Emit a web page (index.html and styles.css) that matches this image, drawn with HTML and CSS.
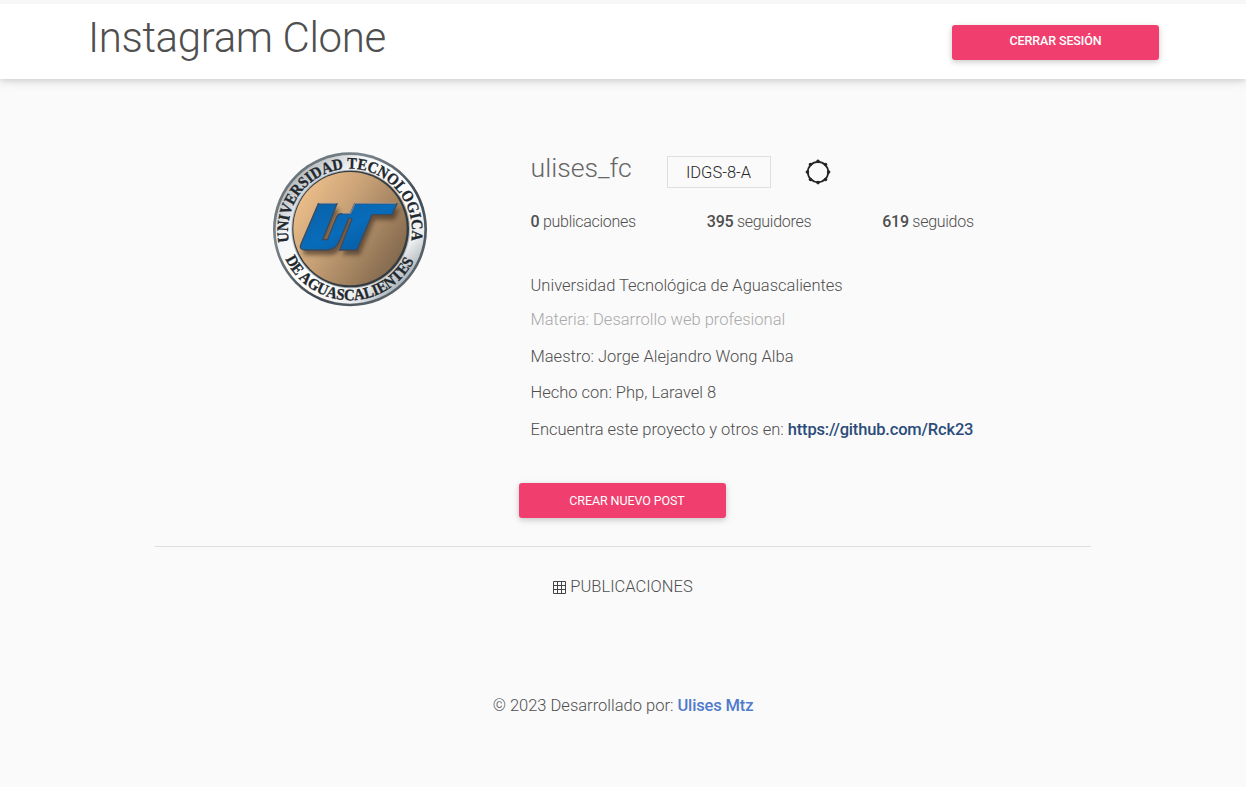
FILE: index.html
```html
<!DOCTYPE html>
<html lang="es">
<head>
<meta charset="utf-8">
<title>Instagram Clone</title>
<link rel="stylesheet" href="styles.css">
</head>
<body>
<header class="navbar">
  <h1 class="brand">Instagram Clone</h1>
  <button class="btn btn-logout">CERRAR SESIÓN</button>
</header>
<main class="content">
  <section class="profile">
    <svg class="avatar" viewBox="36 34 468 468" role="img" aria-label="Universidad Tecnologica de Aguascalientes">
      <defs>
        <linearGradient id="rim" x1="0" y1="0" x2="1" y2="1">
          <stop offset="0" stop-color="#59636a"/><stop offset=".3" stop-color="#7b858b"/>
          <stop offset=".6" stop-color="#424b52"/><stop offset="1" stop-color="#68727a"/>
        </linearGradient>
        <linearGradient id="silver" x1="0" y1="0" x2="1" y2="1">
          <stop offset="0" stop-color="#aeb4b8"/><stop offset=".15" stop-color="#b9bfc3"/>
          <stop offset=".3" stop-color="#f5f6f7"/><stop offset=".55" stop-color="#ffffff"/>
          <stop offset=".75" stop-color="#eceeef"/><stop offset=".87" stop-color="#a6aeb3"/>
          <stop offset="1" stop-color="#e8eaeb"/>
        </linearGradient>
        <linearGradient id="tan" x1="0" y1=".15" x2="1" y2=".8">
          <stop offset="0" stop-color="#f3c48e"/><stop offset=".4" stop-color="#c9a277"/>
          <stop offset="1" stop-color="#7c6349"/>
        </linearGradient>
        <linearGradient id="blue" x1="0" y1="0" x2="1" y2="1">
          <stop offset="0" stop-color="#0a60a8"/><stop offset=".5" stop-color="#086cba"/>
          <stop offset="1" stop-color="#07559a"/>
        </linearGradient>
        <filter id="soft" x="-20%" y="-20%" width="150%" height="150%"><feGaussianBlur stdDeviation="6"/></filter>
        <path id="arc-top" d="M87 307 A186 186 0 1 1 453 306"/>
        <path id="arc-bottom" d="M76 358 A214 214 0 0 0 465 356"/>
      </defs>
      <circle cx="270" cy="269" r="231" fill="url(#rim)"/>
      <circle cx="270" cy="269" r="223" fill="url(#silver)"/>
      <circle cx="272" cy="268" r="178" fill="#aeb5b9"/>
      <circle cx="272" cy="268" r="175" fill="#343b40"/>
      <circle cx="270" cy="267" r="170" fill="url(#tan)"/>
      <g class="logo-ring">
        <text textLength="648" lengthAdjust="spacingAndGlyphs"><textPath href="#arc-top" textLength="648" lengthAdjust="spacingAndGlyphs">UNIVERSIDAD TECNOLOGICA</textPath></text>
        <text textLength="480" lengthAdjust="spacingAndGlyphs"><textPath href="#arc-bottom" textLength="480" lengthAdjust="spacingAndGlyphs">DE AGUASCALIENTES</textPath></text>
      </g>
      <g>
        <path d="M175 192H231L188 300H202L230 231Q234 222 244 222H271L284 192H411L396 225H336L291 331H239L276 237H266L238 304Q226 331 202 331H135Q116 331 123 313Z" transform="translate(8 15)" fill="#35251a" opacity=".6" filter="url(#soft)"/>
        <path d="M175 192H231L188 300H202L230 231Q234 222 244 222H271L284 192H411L396 225H336L291 331H239L276 237H266L238 304Q226 331 202 331H135Q116 331 123 313Z" fill="url(#blue)" stroke="#3d4a5c" stroke-width="4"/>
        <path d="M178 191H230M247 221H272L285 191H409" fill="none" stroke="#b0aeb6" stroke-width="2"/>
      </g>
    </svg>
    <div class="details">
      <div class="identity">
        <h2 class="username">ulises_fc</h2>
        <span class="group">IDGS-8-A</span>
        <svg class="gear" viewBox="0 0 26 26">
          <circle cx="13" cy="13" r="10.2" fill="none" stroke="#262626" stroke-width="1.8"/>
          <g fill="#262626"><circle cx="13" cy="2.4" r="1.8"/><circle cx="20.5" cy="5.5" r="1.8"/><circle cx="23.6" cy="13" r="1.8"/><circle cx="20.5" cy="20.5" r="1.8"/><circle cx="13" cy="23.6" r="1.8"/><circle cx="5.5" cy="20.5" r="1.8"/><circle cx="2.4" cy="13" r="1.8"/><circle cx="5.5" cy="5.5" r="1.8"/></g>
        </svg>
      </div>
      <div class="stats">
        <span><b>0</b> publicaciones</span>
        <span><b>395</b> seguidores</span>
        <span><b>619</b> seguidos</span>
      </div>
      <p class="line school">Universidad Tecnológica de Aguascalientes</p>
      <p class="line subject">Materia: Desarrollo web profesional</p>
      <p class="line">Maestro: Jorge Alejandro Wong Alba</p>
      <p class="line">Hecho con: Php, Laravel 8</p>
      <p class="line">Encuentra este proyecto y otros en: <a class="repo">https://github.com/Rck23</a></p>
    </div>
  </section>
  <button class="btn btn-post">CREAR NUEVO POST</button>
  <div class="posts-tab">
    <svg class="grid-icon" viewBox="0 0 13 13"><path d="M.5 .5H12.5V12.5H.5ZM4.5 .5V12.5M8.5 .5V12.5M.5 4.5H12.5M.5 8.5H12.5" fill="none" stroke="#444"/></svg>
    <span>PUBLICACIONES</span>
  </div>
</main>
<footer class="footer"><span>© 2023 Desarrollado por: <a class="author">Ulises Mtz</a></span></footer>
</body>
</html>
```
FILE: styles.css
```css
* { box-sizing: border-box; }
body {
  margin: 0;
  height: 787px;
  overflow: hidden;
  border-top: 4px solid #f7f7f7;
  background: #fafafa;
  color: #4f4f4f;
  font: 300 16.5px/24px Roboto, sans-serif;
  white-space: nowrap;
}
h1, h2, p { margin: 0; font-weight: 300; }
.navbar {
  display: flex;
  justify-content: space-between;
  align-items: flex-start;
  height: 75px;
  padding: 0 87px 0 88px;
  background: #fff;
  box-shadow: 0 2px 5px rgba(0,0,0,.1), 0 2px 12px rgba(0,0,0,.1);
}
.brand { padding-top: 9px; font-size: 42px; line-height: 50px; letter-spacing: -.37px; }
.btn {
  display: block;
  width: 207px;
  height: 35px;
  padding: 0;
  border: 0;
  border-radius: 3px;
  background: #f03f6e;
  color: #fff;
  font: 400 12.5px/35px Roboto, sans-serif;
  box-shadow: 0 2px 5px rgba(0,0,0,.12), 0 2px 8px rgba(0,0,0,.1);
}
.btn-logout { margin-top: 21px; padding-bottom: 3px; font-weight: 500; line-height: 32px; letter-spacing: -.1px; }
.content { width: 936px; margin: 0 auto; }
.profile { display: flex; height: 404px; padding: 72px 0 0 117px; }
.avatar { width: 156px; height: 156px; margin-right: 102.5px; }
.logo-ring {
  fill: #22282d;
  stroke: #22282d;
  stroke-width: 1;
  font: bold 48px "Liberation Serif", serif;
}
.identity { display: flex; height: 37px; }
.username { width: 136px; color: #666; font-size: 26.7px; line-height: 35px; }
.group {
  width: 104px;
  height: 32px;
  margin: 5px 34.5px 0 0;
  border: 1px solid #dfdfdf;
  color: #262626;
  line-height: 31px;
  text-align: center;
}
.gear { width: 26px; height: 26px; margin-top: 8px; }
.stats { display: flex; gap: 71px; margin-top: 22px; font-size: 16px; letter-spacing: -.28px; }
.stats b { font-weight: 500; }
.line { height: 36.5px; line-height: 24px; }
.school { height: 34px; margin-top: 40px; }
.subject { color: #a9a9a9; }
.repo { color: #2b4c7a; font-weight: 500; letter-spacing: -.17px; }
.btn-post { margin-left: 364px; padding-left: 9px; letter-spacing: -.1px; }
.posts-tab {
  display: flex;
  justify-content: center;
  gap: 4px;
  margin-top: 28px;
  padding-top: 28px;
  border-top: 1px solid #dedede;
}
.grid-icon { width: 13px; height: 13px; margin-top: 6px; }
.footer { margin-top: 95px; text-align: center; }
.author { color: #4f7bcc; font-weight: 500; letter-spacing: -.15px; }
```
